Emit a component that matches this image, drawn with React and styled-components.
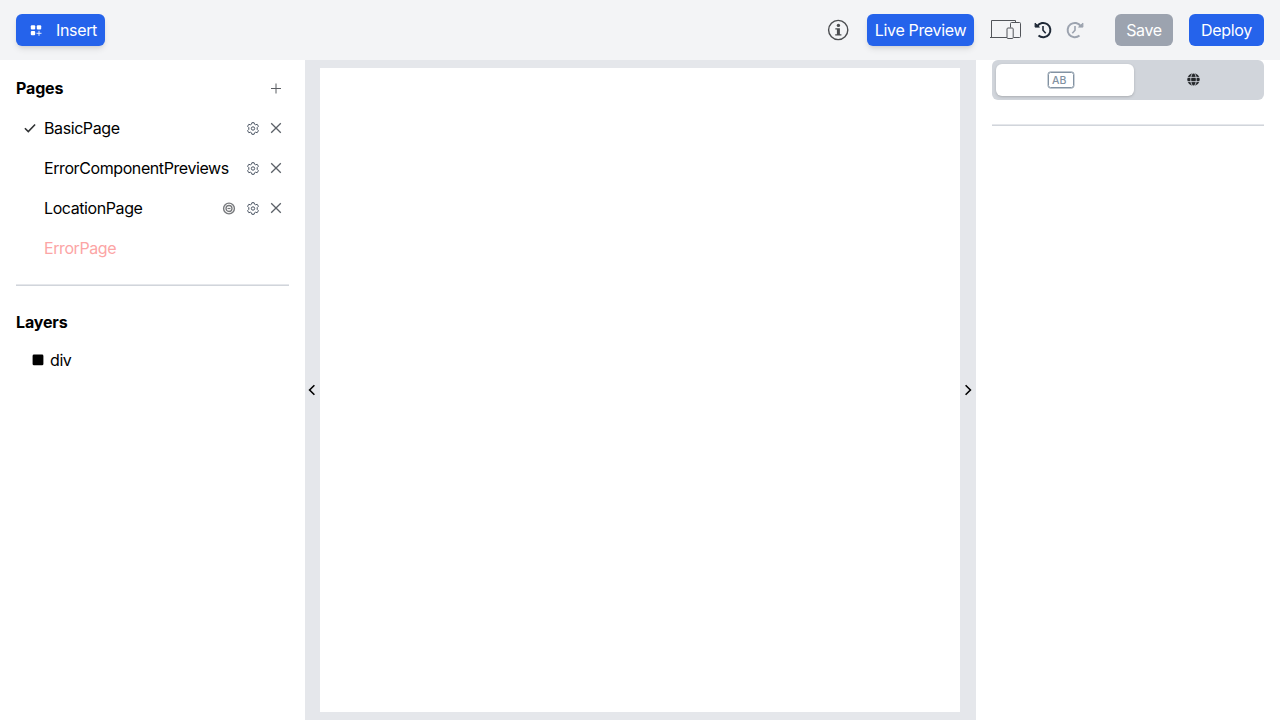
import React from "react";
import styled, { createGlobalStyle, css } from "styled-components";

const GlobalStyle = createGlobalStyle`
  *, *::before, *::after { box-sizing: border-box; }
  body { margin: 0; background: #fff; color: #000; font: 400 16px/24px Inter, "Liberation Sans", sans-serif; letter-spacing: -0.41px; }
  button { font: inherit; letter-spacing: inherit; color: inherit; border: 0; padding: 0; background: none; }
  svg { display: block; flex: none; }
`;

const Shell = styled.div`
  display: grid;
  grid-template: 60px 660px / 305px 671px 304px;
  width: 1280px;
  height: 720px;
  overflow: hidden;
`;

const Toolbar = styled.header`
  grid-column: 1 / -1;
  display: flex;
  align-items: center;
  padding: 0 16px;
  background: #f3f4f6;
`;

const Button = styled.button`
  && {
    display: flex;
    align-items: center;
    justify-content: center;
    width: ${(p) => p.$width}px;
    height: 32px;
    border-radius: 6px;
    color: #fff;
    background: ${(p) => (p.$muted ? "#9ca3af" : "#2563eb")};
    letter-spacing: -0.34px;
    white-space: nowrap;
    ${(p) => p.$raised && css`
      box-shadow: 0 4px 6px -1px rgb(0 0 0 / 0.1), 0 2px 4px -2px rgb(0 0 0 / 0.1);
    `}
  }
`;

const InsertButton = styled(Button)`
  && {
    justify-content: flex-start;
    padding-left: 14px;
    gap: 14px;
  }
`;

const Tools = styled.div`
  display: flex;
  align-items: center;
  margin-left: auto;
`;

const InfoButton = styled.button`
  margin-right: 18px;
`;

const History = styled.div`
  display: flex;
  align-items: center;
  gap: 14px;
  margin: 0 31px 0 16px;
`;

const DeployButton = styled(Button)`
  && { margin-left: 16px; }
`;

const Sidebar = styled.aside`
  padding: 16px 16px 0;
`;

const SectionHead = styled.div`
  display: flex;
  align-items: center;
  justify-content: space-between;
  height: 24px;
  padding-right: 8px;
`;

const Title = styled.h2`
  margin: 0;
  font-size: 16px;
  font-weight: 700;
  letter-spacing: -0.16px;
`;

const PageList = styled.ul`
  list-style: none;
  margin: 8px 0 0;
  padding: 0;
`;

const PageRow = styled.li`
  display: flex;
  align-items: center;
  height: 40px;
  padding: 0 7px 0 8px;
  color: ${(p) => (p.$error ? "#fca5a5" : "#000")};
`;

const Marker = styled.span`
  width: 20px;
`;

const PageName = styled.span`
  flex: 1;
  white-space: nowrap;
`;

const RowActions = styled.span`
  display: flex;
  align-items: center;
  gap: 11px;
`;

const Divider = styled.hr`
  margin: ${(p) => p.$top}px 0 0;
  height: 2px;
  border: 0;
  background: linear-gradient(#e5e7eb 50%, #d1d5db 50%);
`;

const Layers = styled.section`
  margin-top: 24px;
`;

const LayerRow = styled.div`
  display: flex;
  align-items: center;
  gap: 6px;
  height: 24px;
  margin-top: 14px;
  padding-left: 16px;
`;

const Stage = styled.main`
  display: grid;
  grid-template-columns: 15px 640px 16px;
  padding: 8px 0;
  background: #e5e7eb;
`;

const CollapseHandle = styled.button`
  display: flex;
  align-items: center;
  justify-content: ${(p) => (p.$start ? "flex-start" : "center")};
  && { padding-left: ${(p) => (p.$start ? 3 : 0)}px; }
`;

const Canvas = styled.div`
  background: #fff;
`;

const Inspector = styled.aside`
  padding: 0 16px;
`;

const Tabs = styled.div`
  display: grid;
  grid-template-columns: 138px 1fr;
  height: 40px;
  padding: 4px;
  border-radius: 6px;
  background: #d1d5db;
`;

const Tab = styled.button`
  && {
    display: flex;
    align-items: center;
    justify-content: center;
    border-radius: 6px;
    ${(p) => p.$active ? css`
      padding-right: 8px;
      background: #fff;
      box-shadow: 0 1px 3px rgb(0 0 0 / 0.16), 0 1px 2px -1px rgb(0 0 0 / 0.1);
    ` : css`
      padding: 0 8px 1px 0;
    `}
  }
`;

const ContentGlyph = styled.span`
  width: 26px;
  height: 16px;
  padding-left: 3px;
  border: 1px solid #8292a2;
  border-radius: 2.5px;
  box-shadow: 0 0 0 0.4px #8292a2;
  color: #8292a2;
  font-size: 10.5px;
  font-weight: 500;
  line-height: 15px;
  letter-spacing: 0.1px;
  text-align: left;
`;

const LayerIcon = () => (
  <svg width="12" height="12" viewBox="0 0 12 12">
    <rect x=".6" y=".5" width="10.8" height="10.8" rx="1.4" />
  </svg>
);

const InsertIcon = () => (
  <svg width="12" height="12" viewBox="0 0 12 12" fill="#fff">
    <rect x=".8" y="1.2" width="4.4" height="4.2" rx="1" />
    <rect x="6.8" y="1.2" width="4.4" height="4.2" rx="1" />
    <rect x=".8" y="7" width="4.4" height="4.2" rx="1" />
    <path d="M9 6.8v5M6.5 9.3h5" stroke="#fff" strokeWidth=".9" />
  </svg>
);

const InfoIcon = () => (
  <svg width="22" height="22" viewBox="0 0 22 22" fill="none" stroke="#4b4d50">
    <circle cx="11.2" cy="11" r="9.6" strokeWidth="1.4" />
    <circle cx="11.4" cy="6.4" r="1.7" fill="#4b4d50" stroke="none" />
    <path d="M8.3 9.3H12.9V15.3H14.4V16.6H8.2V15.3H9.9V10.5H8.3z" fill="#4b4d50" stroke="none" />
  </svg>
);

const DevicesIcon = () => (
  <svg width="31" height="22" viewBox="0 0 31 22" fill="none" stroke="#52555a" strokeWidth="1">
    <path d="M1.5 18.5V1.5H25.5V3.5M0 18.5H17" />
    <path d="M20.5 8.5V4.5Q20.5 3.5 21.5 3.5H29.5Q30.5 3.5 30.5 4.5V17.5Q30.5 18.5 29.5 18.5H23.5" />
    <rect x="17" y="9" width="6.2" height="10.5" rx="1" />
  </svg>
);

const HistoryIcon = ({ color, flipped }) => (
  <svg width={flipped ? 18 : 17} height="18" viewBox={flipped ? "0 0 18 18" : "1 0 17 18"} overflow="visible" fill="none" stroke={color} strokeWidth="2">
    <g transform={flipped ? "translate(18 0) scale(-1 1)" : undefined}>
      <path d="M3.2 5.1A7.2 7.2 0 1 1 4.5 14.6" />
      <path d="M1.1 2.1V6.1H5.4z" fill={color} strokeWidth="1" />
      <path d="M9 5V9.3L11.7 12.2" strokeWidth="1.6" />
    </g>
  </svg>
);

const PlusIcon = () => (
  <svg width="10" height="11" viewBox="0 0 10 11" stroke="#5b5e63" strokeWidth="1">
    <path d="M5 .5v10M0 5.5h10" />
  </svg>
);

const CheckIcon = () => (
  <svg width="12" height="12" viewBox="0 0 12 12" fill="none" stroke="#303234" strokeWidth="1.6">
    <path d="M.9 6.2 4.3 9.5 11.1 2.5" />
  </svg>
);

const GearIcon = () => (
  <svg width="12" height="13" viewBox="0 0 12 13" fill="none" stroke="#4b5563" strokeWidth="1" strokeLinejoin="round">
    <path d="M4.9.7H7.1L7.5 2.2 8.6 2.8 10.2 2.3 11.4 4.3 10.2 5.6V7.4L11.4 8.7 10.2 10.7 8.6 10.2 7.5 10.8 7.1 12.3H4.9L4.5 10.8 3.4 10.2 1.8 10.7.6 8.7 1.8 7.4V5.6L.6 4.3 1.8 2.3 3.4 2.8 4.5 2.2z" />
    <circle cx="6" cy="6.5" r="1.7" />
  </svg>
);

const CloseIcon = () => (
  <svg width="12" height="12" viewBox="0 0 12 12" stroke="#5b6067" strokeWidth="1.3">
    <path d="M1.2 1.2l9.6 9.6M10.8 1.2L1.2 10.8" />
  </svg>
);

const TargetIcon = () => (
  <svg width="14" height="13" viewBox="0 0 14 13" fill="none" stroke="#77797c">
    <circle cx="7" cy="6.5" r="5.4" strokeWidth="1.4" />
    <circle cx="7" cy="6.5" r="3" strokeWidth="1.3" />
    <path d="M5.5 6.5h3" strokeWidth="1.2" />
  </svg>
);

const ChevronIcon = ({ right }) => (
  <svg width="8" height="12" viewBox="0 0 8 12" fill="none" stroke="#000" strokeWidth="1.6">
    <path d={right ? "M1.6 1.2 6.4 6 1.6 10.8" : "M6.4 1.2 1.6 6 6.4 10.8"} />
  </svg>
);

const GlobeIcon = () => (
  <svg width="13" height="13" viewBox="0 0 13 13" fill="none">
    <circle cx="6.5" cy="6.5" r="6.2" fill="#25282b" />
    <g stroke="#d1d5db" strokeWidth=".85">
      <path d="M0 4.4h13M0 8.6h13" />
      <ellipse cx="6.5" cy="6.5" rx="2.8" ry="6.5" />
    </g>
  </svg>
);

const pages = [
  { name: "BasicPage", selected: true, editable: true },
  { name: "ErrorComponentPreviews", editable: true },
  { name: "LocationPage", editable: true, dynamic: true },
  { name: "ErrorPage", error: true },
];

export default function App() {
  return (
    <>
      <GlobalStyle />
      <Shell>
        <Toolbar>
          <InsertButton $width={89} $raised><InsertIcon />Insert</InsertButton>
          <Tools>
            <InfoButton aria-label="Information"><InfoIcon /></InfoButton>
            <Button $width={107} $raised>Live Preview</Button>
            <History>
              <DevicesIcon />
              <HistoryIcon color="#1f2937" />
              <HistoryIcon color="#9ca3af" flipped />
            </History>
            <Button $width={58} $muted>Save</Button>
            <DeployButton $width={75}>Deploy</DeployButton>
          </Tools>
        </Toolbar>
        <Sidebar>
          <SectionHead><Title>Pages</Title><PlusIcon /></SectionHead>
          <PageList>
            {pages.map((page) => (
              <PageRow key={page.name} $error={page.error}>
                <Marker>{page.selected && <CheckIcon />}</Marker>
                <PageName>{page.name}</PageName>
                {page.editable && (
                  <RowActions>
                    {page.dynamic && <TargetIcon />}
                    <GearIcon />
                    <CloseIcon />
                  </RowActions>
                )}
              </PageRow>
            ))}
          </PageList>
          <Divider $top={16} />
          <Layers>
            <Title>Layers</Title>
            <LayerRow><LayerIcon />div</LayerRow>
          </Layers>
        </Sidebar>
        <Stage>
          <CollapseHandle $start aria-label="Collapse left panel"><ChevronIcon /></CollapseHandle>
          <Canvas />
          <CollapseHandle aria-label="Collapse right panel"><ChevronIcon right /></CollapseHandle>
        </Stage>
        <Inspector>
          <Tabs>
            <Tab $active><ContentGlyph>AB</ContentGlyph></Tab>
            <Tab aria-label="Page settings"><GlobeIcon /></Tab>
          </Tabs>
          <Divider $top={24} />
        </Inspector>
      </Shell>
    </>
  );
}
